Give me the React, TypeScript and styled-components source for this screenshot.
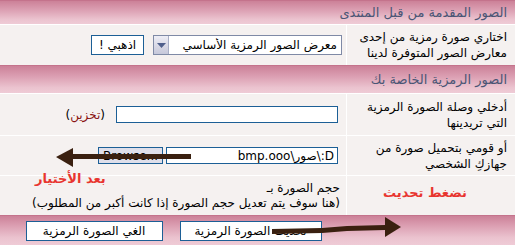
import React from 'react';
import styled, { createGlobalStyle } from 'styled-components';

const GlobalStyle = createGlobalStyle`
  html, body {
    margin: 0;
    padding: 0;
    background: #f5f1f0;
  }
  * {
    box-sizing: border-box;
  }
`;

const Page = styled.div`
  position: relative;
  width: 515px;
  height: 245px;
  overflow: hidden;
  font-family: "DejaVu Sans", Tahoma, sans-serif;
  font-size: 12px;
  color: #000000;
  background: #f5f1f0;
`;

const SectionHeader = styled.div<{ $height: number }>`
  height: ${(p) => p.$height}px;
  display: flex;
  align-items: center;
  padding-right: 8px;
  background: linear-gradient(180deg, #cc8198 0%, #dca0b3 40%, #ebc3cf 80%, #efcbd6 100%);
  border-top: 1px solid #c4738c;
  color: #4a5575;
  font-size: 13px;
`;

const Row = styled.div<{ $height: number }>`
  display: grid;
  grid-template-columns: 169px 1fr;
  height: ${(p) => p.$height}px;
  border-top: 1px solid #ffffff;
`;

const LabelCell = styled.div`
  display: flex;
  flex-direction: column;
  justify-content: center;
  padding-right: 8px;
  border-left: 1px solid #ffffff;
  line-height: 16px;
`;

const FieldCell = styled.div<{ $pad: number; $gap: number }>`
  display: flex;
  align-items: center;
  gap: ${(p) => p.$gap}px;
  padding-right: ${(p) => p.$pad}px;
`;

const NoteCell = styled.div`
  display: flex;
  flex-direction: column;
  justify-content: center;
  padding-right: 6px;
  line-height: 15px;
`;

const Select = styled.div`
  width: 189px;
  height: 20px;
  display: flex;
  align-items: center;
  border: 1px solid #7f8aa6;
  background: #ffffff;
`;

const SelectText = styled.span`
  flex: 1;
  padding-right: 4px;
  white-space: nowrap;
  overflow: hidden;
`;

const SelectArrow = styled.span`
  width: 15px;
  height: 18px;
  display: flex;
  align-items: center;
  justify-content: center;
  border-right: 1px solid #a8aec6;
  background: linear-gradient(180deg, #eeeef6 0%, #d6d6e4 60%, #c6c8da 100%);
`;

const BlueButton = styled.div<{ $width: number; $height?: number; $bg?: string; $ltr?: boolean }>`
  width: ${(p) => p.$width}px;
  height: ${(p) => p.$height || 20}px;
  display: flex;
  align-items: center;
  justify-content: center;
  border: 1px solid #1c5f96;
  background: ${(p) => p.$bg || '#ffffff'};
  direction: ${(p) => (p.$ltr ? 'ltr' : 'rtl')};
  white-space: nowrap;
`;

const TextBox = styled.div<{ $width: number }>`
  width: ${(p) => p.$width}px;
  height: 17px;
  display: flex;
  align-items: center;
  padding-right: 3px;
  border: 1px solid #1c5f96;
  background: #ffffff;
  white-space: nowrap;
`;

const PathText = styled.span`
  direction: ltr;
  unicode-bidi: isolate;
`;

const StoreWord = styled.span`
  color: #8a1414;
`;

const Footer = styled.div`
  height: 30px;
  display: grid;
  grid-template-columns: 169px 1fr;
  align-items: center;
  background: linear-gradient(180deg, #cc8198 0%, #dca0b3 35%, #ebc3cf 75%, #efcbd6 100%);
  border-top: 1px solid #c4738c;
`;

const FooterButtons = styled.div`
  display: flex;
  justify-content: center;
  gap: 17px;
  padding-left: 1px;
`;

// hand-written notes laid over the form
const Annotation = styled.span<{ $x: number; $y: number }>`
  position: absolute;
  left: ${(p) => p.$x}px;
  top: ${(p) => p.$y}px;
  color: #e8352f;
  font-weight: bold;
  font-size: 13px;
  white-space: nowrap;
`;

const ArrowLayer = styled.svg`
  position: absolute;
  left: 0;
  top: 0;
  pointer-events: none;
`;

const App: React.FC = () => {
  return (
    <Page dir="rtl">
      <GlobalStyle />

      <SectionHeader $height={24}>الصور المقدمة من قبل المنتدى</SectionHeader>
      <Row $height={41}>
        <LabelCell>
          <span>اختاري صورة رمزية من إحدى</span>
          <span>معارض الصور المتوفرة لدينا</span>
        </LabelCell>
        <FieldCell $pad={4} $gap={9}>
          <Select>
            <SelectText>معرض الصور الرمزية الأساسي</SelectText>
            <SelectArrow>
              <svg width="9" height="5" viewBox="0 0 9 5">
                <path d="M0 0 H9 L4.5 5 Z" fill="#4f5f8c" />
              </svg>
            </SelectArrow>
          </Select>
          <BlueButton $width={53}>اذهبي !</BlueButton>
        </FieldCell>
      </Row>

      <SectionHeader $height={28}>الصور الرمزية الخاصة بك</SectionHeader>
      <Row $height={42}>
        <LabelCell>
          <span>أدخلي وصلة الصورة الرمزية</span>
          <span>التي تريدينها</span>
        </LabelCell>
        <FieldCell $pad={8} $gap={11}>
          <TextBox $width={222} />
          <span>
            (<StoreWord>تخزين</StoreWord>)
          </span>
        </FieldCell>
      </Row>
      <Row $height={40}>
        <LabelCell>
          <span>أو قومي بتحميل صورة من</span>
          <span>جهازكِ الشخصي</span>
        </LabelCell>
        <FieldCell $pad={8} $gap={3}>
          <TextBox $width={172}>
            <PathText>bmp.ooo\صور\:D</PathText>
          </TextBox>
          <BlueButton $width={65} $height={17} $bg="#dfdfea" $ltr>
            Browse...
          </BlueButton>
        </FieldCell>
      </Row>
      <Row $height={40}>
        <LabelCell />
        <NoteCell>
          <span>حجم الصورة بـ</span>
          <span>(هنا سوف يتم تعديل حجم الصورة إذا كانت أكبر من المطلوب)</span>
        </NoteCell>
      </Row>

      <Footer>
        <div />
        <FooterButtons>
          <BlueButton $width={142}>تحديث الصورة الرمزية</BlueButton>
          <BlueButton $width={137}>الغي الصورة الرمزية</BlueButton>
        </FooterButtons>
      </Footer>

      <Annotation $x={35} $y={171}>بعد الأختيار</Annotation>
      <Annotation $x={383} $y={185}>نضغط تحديث</Annotation>

      <ArrowLayer width="515" height="245" viewBox="0 0 515 245">
        <g fill="#3a2010">
          <rect x="70" y="154" width="121" height="5" />
          <polygon points="56,157 73,148 73,167" />
          <polygon points="272,229 322,228 347,226 385,225 385,230 347,231 322,233 272,234" />
          <polygon points="401,227 385,217 385,237" />
        </g>
      </ArrowLayer>
    </Page>
  );
};

export default App;
